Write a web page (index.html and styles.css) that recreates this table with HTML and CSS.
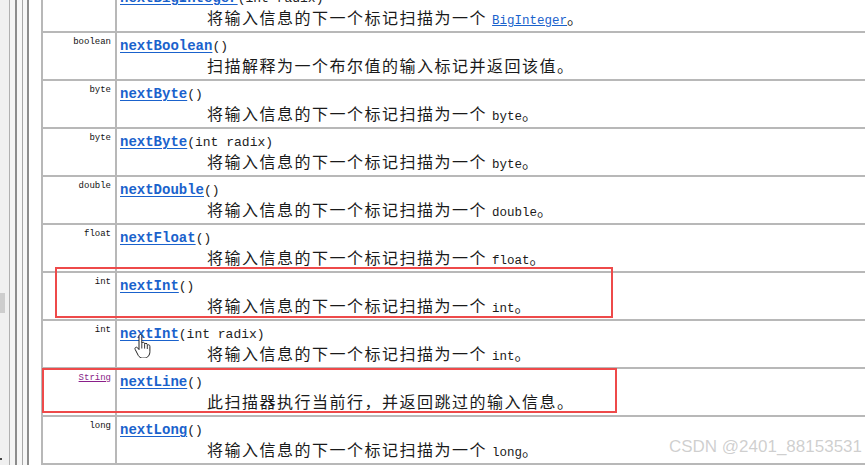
FILE: index.html
```html
<!DOCTYPE html>
<html lang="zh">
<head>
<meta charset="utf-8">
<link rel="stylesheet" href="styles.css">
</head>
<body>
<div class="frame">
  <div class="gutter">
    <div class="pane pane-a"><div class="thumb"></div><div class="dot"></div></div>
    <div class="pane pane-b"></div>
    <div class="pane pane-c"></div>
    <div class="pane pane-d"></div>
  </div>
  <div class="table">
    <div class="row first">
      <div class="type"></div>
      <div class="cell"><div class="sig"><a class="m">nextBigInteger</a><span class="p">(int radix)</span></div><div class="desc">将输入信息的下一个标记扫描为一个 <a class="ref">BigInteger</a>。</div></div>
    </div>
    <div class="row">
      <div class="type">boolean</div>
      <div class="cell"><div class="sig"><a class="m">nextBoolean</a><span class="p">()</span></div><div class="desc">扫描解释为一个布尔值的输入标记并返回该值。</div></div>
    </div>
    <div class="row">
      <div class="type">byte</div>
      <div class="cell"><div class="sig"><a class="m">nextByte</a><span class="p">()</span></div><div class="desc">将输入信息的下一个标记扫描为一个 <code>byte</code>。</div></div>
    </div>
    <div class="row">
      <div class="type">byte</div>
      <div class="cell"><div class="sig"><a class="m">nextByte</a><span class="p">(int radix)</span></div><div class="desc">将输入信息的下一个标记扫描为一个 <code>byte</code>。</div></div>
    </div>
    <div class="row">
      <div class="type">double</div>
      <div class="cell"><div class="sig"><a class="m">nextDouble</a><span class="p">()</span></div><div class="desc">将输入信息的下一个标记扫描为一个 <code>double</code>。</div></div>
    </div>
    <div class="row">
      <div class="type">float</div>
      <div class="cell"><div class="sig"><a class="m">nextFloat</a><span class="p">()</span></div><div class="desc">将输入信息的下一个标记扫描为一个 <code>float</code>。</div></div>
    </div>
    <div class="row">
      <div class="type">int</div>
      <div class="cell"><div class="sig"><a class="m">nextInt</a><span class="p">()</span></div><div class="desc">将输入信息的下一个标记扫描为一个 <code>int</code>。</div></div>
    </div>
    <div class="row">
      <div class="type">int</div>
      <div class="cell"><div class="sig"><a class="m">nextInt</a><span class="p">(int radix)</span></div><div class="desc">将输入信息的下一个标记扫描为一个 <code>int</code>。</div></div>
    </div>
    <div class="row">
      <div class="type"><a class="visited">String</a></div>
      <div class="cell"><div class="sig"><a class="m">nextLine</a><span class="p">()</span></div><div class="desc">此扫描器执行当前行，并返回跳过的输入信息。</div></div>
    </div>
    <div class="row">
      <div class="type">long</div>
      <div class="cell"><div class="sig"><a class="m">nextLong</a><span class="p">()</span></div><div class="desc">将输入信息的下一个标记扫描为一个 <code>long</code>。</div></div>
    </div>
  </div>
  <div class="mark mark-int"></div>
  <div class="mark mark-line"></div>
  <svg class="cursor" width="17" height="24" viewBox="0 0 17 24">
    <path d="M5 2.2c0-1 .6-1.7 1.4-1.7s1.4.7 1.4 1.7v7.3c.2-.8.8-1.2 1.4-1.2.8 0 1.4.6 1.4 1.5v.6c.2-.7.8-1.1 1.4-1.1.8 0 1.3.6 1.3 1.4v.9c.3-.5.8-.8 1.3-.8.8 0 1.3.7 1.3 1.6v5.2c0 3.2-2 6.5-5.7 6.5H8.6c-2 0-3.2-1-4.3-2.6L1.3 15.7c-.6-.9-.4-1.9.4-2.3.7-.4 1.5-.1 2.1.6L5 15.6V2.2z" fill="#fff" stroke="#222" stroke-width="1" stroke-linejoin="round"/>
    <path d="M7.8 10v4.5M10.6 10.6v4M13.3 12v3" stroke="#222" stroke-width="0.9" fill="none"/>
  </svg>
  <div class="watermark">CSDN @2401_88153531</div>
</div>
</body>
</html>
```
FILE: styles.css
```css
html, body {
  margin: 0;
  padding: 0;
  background: #fff;
}
.frame {
  position: relative;
  width: 865px;
  height: 465px;
  overflow: hidden;
  display: flex;
  align-items: stretch;
}
.gutter {
  display: flex;
  flex: 0 0 auto;
  width: 41px;
}
.pane {
  flex: 0 0 auto;
}
.pane-a {
  width: 9px;
  background: #f0f0f0;
  border-right: 1px solid #b0b0b0;
  display: flex;
  flex-direction: column;
}
.thumb {
  margin-top: 293px;
  width: 5px;
  height: 20px;
  background: #cdcdcd;
}
.dot {
  margin-top: 145px;
  width: 2px;
  height: 2px;
  background: #444;
}
.pane-b {
  width: 5px;
  background: #f4f4f4;
  border-right: 2px solid #8c8c8c;
}
.pane-c {
  width: 5px;
  background: #f6f6f6;
  border-right: 1px solid #a6a6a6;
}
.pane-d {
  width: 4px;
  background: #f6f6f6;
  border-right: 2px solid #8c8c8c;
}
.table {
  flex: 1 0 auto;
  margin-top: -15px;
  border-left: 2px solid #b8b8b8;
  display: flex;
  flex-direction: column;
}
.row {
  display: flex;
  height: 46px;
  border-bottom: 2px solid #b8b8b8;
  flex: 0 0 auto;
}
.type {
  width: 68px;
  padding-right: 4px;
  text-align: right;
  font-family: "Liberation Mono", "DejaVu Sans Mono", monospace;
  font-size: 9px;
  line-height: 12px;
  padding-top: 3px;
  color: #111;
  border-right: 2px solid #b8b8b8;
}
.visited {
  color: #8a1f8a;
  text-decoration: underline;
}
.cell {
  flex: 1;
  padding-left: 3px;
  padding-top: 4px;
}
.sig {
  height: 16px;
  line-height: 16px;
  white-space: nowrap;
}
.m {
  font-family: "Liberation Mono", "DejaVu Sans Mono", monospace;
  font-weight: bold;
  font-size: 14px;
  color: #1a62cc;
  text-decoration: underline;
  text-underline-offset: 2px;
}
.p {
  font-family: "Liberation Mono", "DejaVu Sans Mono", monospace;
  font-size: 13px;
  color: #222;
}
.desc {
  margin-top: 0;
  padding-left: 87px;
  height: 24px;
  line-height: 24px;
  font-family: "Noto Sans CJK SC", "Noto Sans", sans-serif;
  font-size: 16px;
  letter-spacing: 1.5px;
  color: #1a1a1a;
  white-space: nowrap;
}
.desc code {
  font-family: "Liberation Mono", "DejaVu Sans Mono", monospace;
  font-size: 12.5px;
  letter-spacing: 0;
}
.ref {
  font-family: "Liberation Mono", "DejaVu Sans Mono", monospace;
  font-size: 12.5px;
  letter-spacing: 0;
  color: #1a62cc;
  text-decoration: underline;
}
.mark {
  position: absolute;
  border: 2px solid #ee4a4a;
  box-sizing: border-box;
}
.mark-int {
  left: 55px;
  top: 267px;
  width: 558px;
  height: 51px;
}
.mark-line {
  left: 42px;
  top: 368px;
  width: 575px;
  height: 45px;
}
.cursor {
  position: absolute;
  left: 134px;
  top: 334px;
}
.watermark {
  position: absolute;
  right: 3px;
  top: 437px;
  font-family: "Liberation Sans", Arial, sans-serif;
  font-size: 17px;
  color: rgba(160, 160, 160, 0.5);
  white-space: nowrap;
}
```
